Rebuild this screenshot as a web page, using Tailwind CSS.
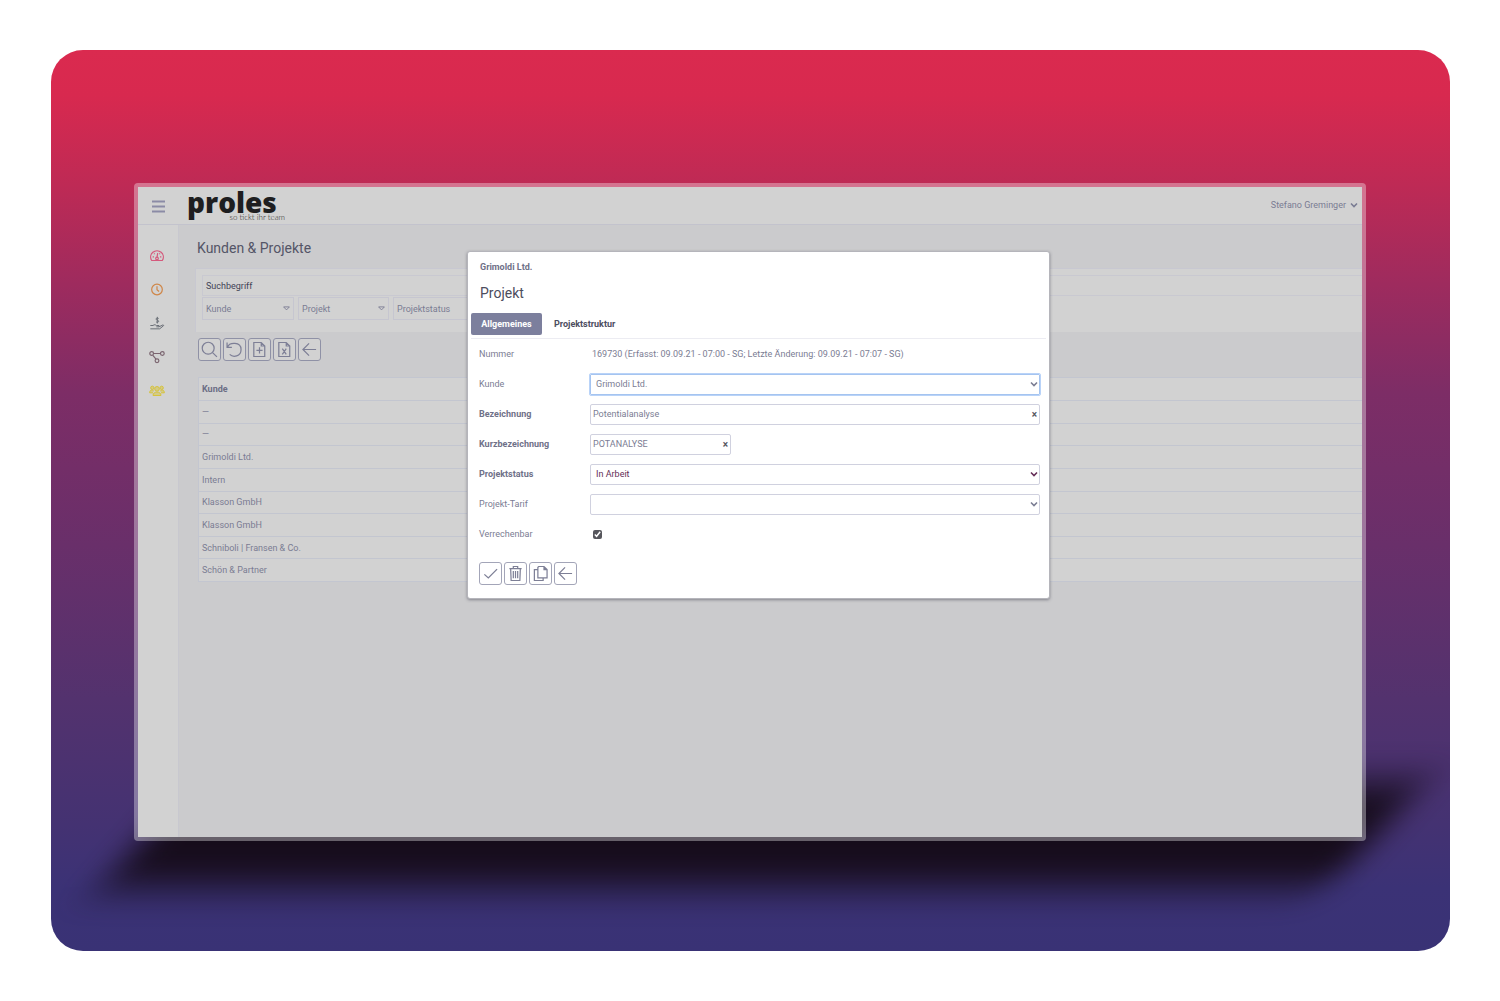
<!DOCTYPE html>
<html lang="de">
<head>
<meta charset="utf-8">
<title>proles – Kunden &amp; Projekte</title>
<script src="https://cdn.jsdelivr.net/npm/@tailwindcss/browser@4"></script>
</head>
<body class="min-h-screen bg-white flex flex-col p-[50px] pl-[51px] font-[Roboto,sans-serif] text-[9px] leading-4 text-[#7a7c93]">

<svg class="hidden">
  <symbol id="chevron" viewBox="0 0 8 6"><path d="M1 1.500 4 4.500 7 1.500" fill="none" stroke="currentColor" stroke-width="1.600"/></symbol>
  <symbol id="back" viewBox="0 0 24 24"><path d="M19.500 12H5M11.500 5 4.500 12l7 7" fill="none" stroke="currentColor" stroke-width="1.400"/></symbol>
</svg>

<main class="relative flex-1 flex flex-col rounded-[32px] overflow-hidden pl-[83px] pr-[84px] pt-[133px] pb-[110px] bg-[linear-gradient(to_bottom,#da2a4f_0%,#d8294f_5%,#be2a55_15%,#9e2b5e_26%,#7d2d66_38%,#692f6a_55%,#53326e_72%,#443272_86%,#3b3276_93%,#393275_100%)]">
  <div class="absolute left-[96px] right-[74px] bottom-[64px] h-[104px] -skew-x-[42deg] blur-[19px] bg-[#160c1b]"></div>

  <div class="relative flex-1 flex flex-col border-4 border-white/35 rounded-sm bg-clip-padding bg-[#cbcbcd]">
    <header class="flex items-center h-[38px] pl-[14px] pr-1 bg-[#d2d2d2] border-b border-[#c3c3cd]">
      <button aria-label="Menü" class="pt-[2px] text-[#8b8ba6]">
        <svg class="w-[13px] h-[13px]" viewBox="0 0 13 13"><path d="M0 1.500h13M0 6.500h13M0 11.500h13" stroke="currentColor" stroke-width="1.900"/></svg>
      </button>
      <a href="#" class="ml-[22px] self-start flex flex-col w-[98px] text-[#1e1e20]">
        <span class="font-['Open_Sans',sans-serif] font-extrabold text-[28px] leading-[30px]">proles</span>
        <span class="-mt-1 self-end whitespace-nowrap font-[Lato,sans-serif] font-light text-[8px] leading-[9px]">so tickt ihr team</span>
      </a>
      <button class="ml-auto flex items-center gap-1 pb-[2px]">Stefano Greminger <svg class="w-2 h-[6px]"><use href="#chevron"/></svg></button>
    </header>

    <div class="flex-1 flex">
      <nav class="w-[41px] shrink-0 bg-[#d2d2d2] flex flex-col items-center gap-[17px] pt-[22px] pr-[3px] border-r border-[#c8c8cf]">
        <a href="#" aria-label="Dashboard" class="text-[#d5597c]"><svg class="w-4 h-[17px]" viewBox="0 0 24 24" fill="none" stroke="currentColor" stroke-width="1.800"><path d="M4 19.500a9.500 9.500 0 1 1 16 0H4Z"/><path d="M13 8.500 12 15M5.500 14h2M16.500 14h2M7.500 9l1 1M16.500 9l-1 1"/><circle cx="12" cy="16.500" r="2"/></svg></a>
        <a href="#" aria-label="Zeit" class="text-[#cf8648]"><svg class="w-4 h-[17px]" viewBox="0 0 24 24" fill="none" stroke="currentColor" stroke-width="1.800"><circle cx="12" cy="12" r="8"/><path d="M12 7v5.500l3 2.500"/></svg></a>
        <a href="#" aria-label="Spesen" class="text-[#6c7078]"><svg class="w-4 h-[17px]" viewBox="0 0 24 24" fill="none" stroke="currentColor" stroke-width="1.500"><path d="M14.500 4.500c-1-1-4-1-4 .8 0 2.200 4 1.200 4 3.400 0 1.800-3 1.800-4 .6M12.500 2v10M2 15h4c2-2 4-1 5 0h4v2h-4M15 17l6-3c1.500.5 1 1.500 0 2l-5 4H2"/></svg></a>
        <a href="#" aria-label="Projekte" class="text-[#7b6570]"><svg class="w-4 h-[17px]" viewBox="0 0 24 24" fill="none" stroke="currentColor" stroke-width="1.800"><circle cx="4" cy="6" r="2.800"/><circle cx="20" cy="6" r="2.800"/><circle cx="12" cy="17" r="2.800"/><path d="M7 6h10M5.500 8.500l5 6"/></svg></a>
        <a href="#" aria-label="Team" class="text-[#d6c33c]"><svg class="w-4 h-[17px]" viewBox="0 0 24 24" fill="currentColor" fill-opacity=".5" stroke="currentColor" stroke-width="1.500"><circle cx="12" cy="8" r="3.500"/><circle cx="5" cy="6.500" r="2.500"/><circle cx="19" cy="6.500" r="2.500"/><path d="M6 18c0-7 12-7 12 0ZM6 14H1c0-5 4-5 6-3M18 14h5c0-5-4-5-6-3"/></svg></a>
      </nav>

      <section class="flex-1 min-w-0 pl-4">
        <h1 class="h-[43px] pt-[13px] pl-[2px] text-sm leading-5 text-[#545567]">Kunden &amp; Projekte</h1>
        <form class="h-[64px] bg-[#d2d2d2] border-t border-l border-[#c8c8d1] pt-[6px] pl-[6px]">
          <input aria-label="Suchbegriff" placeholder="Suchbegriff" class="block w-full h-[21px] border border-r-0 border-[#c9c9d1] px-[3px] placeholder:text-[#424356]">
          <div class="flex gap-1 mt-px">
            <button type="button" class="w-[92px] h-[23px] flex items-center justify-between border border-[#c6c6d0] px-[3px]">Kunde <svg class="w-[7px] h-[5px]" viewBox="0 0 7 5" fill="none" stroke="currentColor" stroke-width=".9"><path d="M.6.900h5.800L3.500 3.900Z"/></svg></button>
            <button type="button" class="w-[91px] h-[23px] flex items-center justify-between border border-[#c6c6d0] px-[3px]">Projekt <svg class="w-[7px] h-[5px]" viewBox="0 0 7 5" fill="none" stroke="currentColor" stroke-width=".9"><path d="M.6.900h5.800L3.500 3.900Z"/></svg></button>
            <button type="button" class="w-[91px] h-[23px] flex items-center justify-between border border-[#c6c6d0] px-[3px]">Projektstatus</button>
          </div>
        </form>

        <div class="flex gap-[2px] pt-[6px] pl-[3px] text-[#7d7f96]">
          <button aria-label="Suchen" class="size-[23px] border border-[#8f91a6] rounded-[3px] bg-[#d2d2d2]"><svg class="size-[21px]" viewBox="0 0 24 24" fill="none" stroke="currentColor" stroke-width="1.400"><circle cx="10.500" cy="10.500" r="6.800"/><path d="m15.500 15.500 5 5"/></svg></button>
          <button aria-label="Zurücksetzen" class="size-[23px] border border-[#8f91a6] rounded-[3px] bg-[#d2d2d2]"><svg class="size-[21px]" viewBox="0 0 24 24" fill="none" stroke="currentColor" stroke-width="1.400"><path d="M3.500 4v5.500H9M4 9.500C6 3.500 19.500 3 19.500 12c0 8-9 9.500-13 5.500"/></svg></button>
          <button aria-label="Neu" class="size-[23px] border border-[#8f91a6] rounded-[3px] bg-[#d2d2d2]"><svg class="size-[21px]" viewBox="0 0 24 24" fill="none" stroke="currentColor" stroke-width="1.400"><path d="M5.500 4H14l4 4v12H5.500ZM14 4v4h4M12 9.500v7M8.500 13h7"/></svg></button>
          <button aria-label="Excel-Export" class="size-[23px] border border-[#8f91a6] rounded-[3px] bg-[#d2d2d2]"><svg class="size-[21px]" viewBox="0 0 24 24" fill="none" stroke="currentColor" stroke-width="1.400"><path d="M5.500 4H14l4 4v12H5.500ZM14 4v4h4M9.500 11l4.500 6.500M14 11l-4.500 6.500"/></svg></button>
          <button aria-label="Zurück" class="size-[23px] border border-[#8f91a6] rounded-[3px] bg-[#d2d2d2]"><svg class="size-[21px]"><use href="#back"/></svg></button>
        </div>

        <div class="pl-[3px] mt-4">
          <table class="w-full h-[205px] border-collapse bg-[#d2d2d2] text-left border-l border-[#c3c6d0]">
            <thead><tr class="h-[23px] border-y border-[#c3c6d0]"><th class="p-0 pl-[3px] font-bold text-[#6c6e85]">Kunde</th></tr></thead>
            <tbody>
              <tr class="border-y border-[#c3c6d0]"><td class="p-0 pl-[3px]">—</td></tr>
              <tr class="border-y border-[#c3c6d0]"><td class="p-0 pl-[3px]">—</td></tr>
              <tr class="border-y border-[#c3c6d0]"><td class="p-0 pl-[3px]">Grimoldi Ltd.</td></tr>
              <tr class="border-y border-[#c3c6d0]"><td class="p-0 pl-[3px]">Intern</td></tr>
              <tr class="border-y border-[#c3c6d0]"><td class="p-0 pl-[3px]">Klasson GmbH</td></tr>
              <tr class="border-y border-[#c3c6d0]"><td class="p-0 pl-[3px]">Klasson GmbH</td></tr>
              <tr class="border-y border-[#c3c6d0]"><td class="p-0 pl-[3px]">Schniboli | Fransen &amp; Co.</td></tr>
              <tr class="border-y border-[#c3c6d0]"><td class="p-0 pl-[3px]">Schön &amp; Partner</td></tr>
            </tbody>
          </table>
        </div>
      </section>
    </div>

    <div class="absolute inset-0 flex justify-center items-start pt-16 pl-[17px]">
      <div role="dialog" aria-label="Projekt" class="w-[583px] h-[348px] bg-white rounded-[3px] border border-[#b5b5bb] shadow-[0_1px_3px_rgba(60,60,75,0.5)] px-[3px] text-[#7b7d93]">
        <div class="pt-[7px] pl-[9px] font-bold text-[#6f7188]">Grimoldi Ltd.</div>
        <h2 class="pt-2 pl-[9px] text-sm leading-5 text-[#4c4d5d]">Projekt</h2>
        <div role="tablist" class="flex mt-[10px] pb-[3px] border-b border-[#ececf2] font-bold text-[#4c4d60]">
          <button role="tab" aria-selected="true" class="h-[22px] w-[71px] pb-px bg-[#7c7f9d] text-white rounded-[2px]">Allgemeines</button>
          <button role="tab" class="h-[22px] px-3 pb-px">Projektstruktur</button>
        </div>
        <form>
          <div class="grid grid-cols-[111px_1fr] pl-2 pr-[6px] auto-rows-[30px] items-center">
            <span>Nummer</span>
            <span class="pl-[2px]">169730 (Erfasst: 09.09.21 - 07:00 - SG; Letzte Änderung: 09.09.21 - 07:07 - SG)</span>

            <label for="kunde">Kunde</label>
            <div class="relative">
              <select id="kunde" class="block appearance-none w-full h-[21px] border border-[#a5c4f0] rounded-[1px] outline outline-1 outline-[#b9d3f8] px-[5px] bg-white"><option>Grimoldi Ltd.</option></select>
              <svg class="absolute right-[2px] top-[7px] w-2 h-[6px] pointer-events-none"><use href="#chevron"/></svg>
            </div>

            <label for="bez" class="font-bold text-[#6f7188]">Bezeichnung</label>
            <div class="relative">
              <input id="bez" value="Potentialanalyse" class="block w-full h-[21px] border border-[#d0d1df] rounded-[2px] px-[2px]">
              <button type="button" aria-label="Leeren" class="absolute right-[3px] top-[3px] text-[10px] font-bold text-[#55565f]">×</button>
            </div>

            <label for="kurz" class="font-bold text-[#6f7188]">Kurzbezeichnung</label>
            <div class="relative w-[141px]">
              <input id="kurz" value="POTANALYSE" class="block w-full h-[21px] border border-[#d0d1df] rounded-[2px] px-[2px]">
              <button type="button" aria-label="Leeren" class="absolute right-[3px] top-[3px] text-[10px] font-bold text-[#55565f]">×</button>
            </div>

            <label for="status" class="font-bold text-[#6f7188]">Projektstatus</label>
            <div class="relative text-[#652e58]">
              <select id="status" class="block appearance-none w-full h-[21px] border border-[#d0d1df] rounded-[2px] px-[5px] bg-white"><option>In Arbeit</option></select>
              <svg class="absolute right-[2px] top-[7px] w-2 h-[6px] pointer-events-none"><use href="#chevron"/></svg>
            </div>

            <label for="tarif">Projekt-Tarif</label>
            <div class="relative">
              <select id="tarif" class="block appearance-none w-full h-[21px] border border-[#d0d1df] rounded-[2px] px-[5px] bg-white"><option></option></select>
              <svg class="absolute right-[2px] top-[7px] w-2 h-[6px] pointer-events-none"><use href="#chevron"/></svg>
            </div>

            <label for="verr">Verrechenbar</label>
            <input id="verr" type="checkbox" checked class="size-[9px] ml-[3px] accent-[#56565c]">
          </div>

          <div class="flex gap-[2px] pl-2 mt-[13px] text-[#7d7f96]">
            <button type="button" aria-label="Speichern" class="size-[23px] border border-[#a3a5b8] rounded-[3px]"><svg class="size-[21px]" viewBox="0 0 24 24" fill="none" stroke="currentColor" stroke-width="1.500"><path d="m5 13 4.500 4L19.500 7"/></svg></button>
            <button type="button" aria-label="Löschen" class="size-[23px] border border-[#a3a5b8] rounded-[3px]"><svg class="size-[21px]" viewBox="0 0 24 24" fill="none" stroke="currentColor" stroke-width="1.400"><path d="M5 6.500h14M9.500 6V4h5v2M6.500 7l.5 13h10l.5-13M9.500 9v8.500M12 9v8.500M14.500 9v8.500"/></svg></button>
            <button type="button" aria-label="Kopieren" class="size-[23px] border border-[#a3a5b8] rounded-[3px]"><svg class="size-[21px]" viewBox="0 0 24 24" fill="none" stroke="currentColor" stroke-width="1.400"><path d="M10 4h6l3.500 3.500V17H9V5ZM16 4v3.500h3.500M9 7.500H5V20h10v-3"/></svg></button>
            <button type="button" aria-label="Zurück" class="size-[23px] border border-[#a3a5b8] rounded-[3px]"><svg class="size-[21px]"><use href="#back"/></svg></button>
          </div>
        </form>
      </div>
    </div>
  </div>
</main>
</body>
</html>
